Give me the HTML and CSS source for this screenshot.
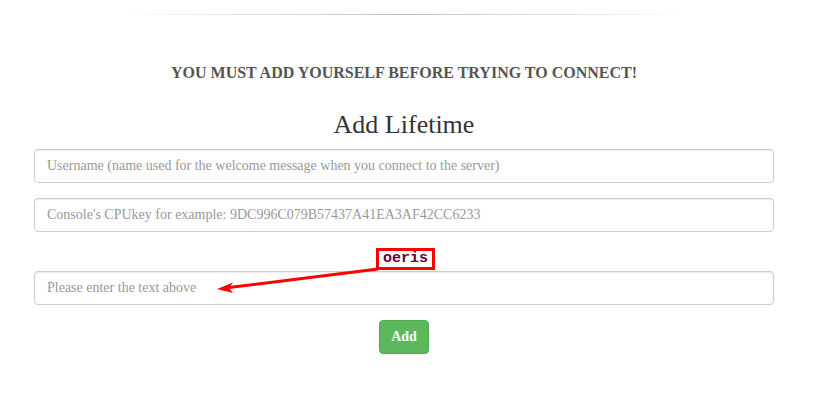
FILE: index.html
```html
<!DOCTYPE html>
<html lang="en">
<head>
  <meta charset="UTF-8" />
  <title>Add Lifetime</title>
  <link rel="stylesheet" href="styles.css">
</head>
<body>
  <div class="page">
    <hr class="fade-line">

    <div class="panel">
      <h4 class="notice">YOU MUST ADD YOURSELF BEFORE TRYING TO CONNECT!</h4>
      <h2 class="title">Add Lifetime</h2>

      <form class="add-form" onsubmit="return false">
        <input type="text" class="form-control" placeholder="Username (name used for the welcome message when you connect to the server)">
        <input type="text" class="form-control" placeholder="Console's CPUkey for example: 9DC996C079B57437A41EA3AF42CC6233">

        <div class="captcha-row">
          <span class="captcha">oeris</span>
        </div>
        <input type="text" class="form-control captcha-input" placeholder="Please enter the text above">

        <div class="actions">
          <button type="submit" class="btn-add">Add</button>
        </div>
      </form>
    </div>

    <!-- pointer from the captcha word to its field -->
    <svg class="pointer" width="831" height="408" viewBox="0 0 831 408">
      <line x1="378" y1="269" x2="229" y2="287.5" stroke="#f00" stroke-width="3" />
      <polygon points="217,289 233,282.5 229,288 233,293" fill="#f00" />
    </svg>
  </div>
</body>
</html>
```

FILE: styles.css
```css
body {
  margin: 0;
  font-family: "Liberation Serif", "Times New Roman", serif;
  background-color: #fff;
  color: #333;
}

.page {
  position: relative;
  width: 831px;
  height: 408px;
  overflow: hidden;
}

.fade-line {
  margin: 14px 0 0 120px;
  width: 570px;
  height: 1px;
  border: none;
  background: linear-gradient(to right, rgba(0,0,0,0), rgba(0,0,0,0.25), rgba(0,0,0,0));
}

.panel {
  margin-left: 34px;
  width: 740px;
}

.notice {
  margin: 50px 0 0;
  text-align: center;
  font-size: 16px;
  font-weight: bold;
  line-height: 16px;
  color: #555;
}

.title {
  margin: 29px 0 0;
  text-align: center;
  font-size: 26px;
  font-weight: normal;
  line-height: 30px;
  color: #333;
}

.add-form {
  margin-top: 9px;
}

.form-control {
  display: block;
  box-sizing: border-box;
  width: 100%;
  height: 34px;
  padding: 6px 12px;
  margin: 0 0 15px;
  font-family: inherit;
  font-size: 14px;
  color: #555;
  background-color: #fff;
  border: 1px solid #ccc;
  border-radius: 4px;
  box-shadow: inset 0 1px 1px rgba(0,0,0,0.075);
}

.form-control::placeholder {
  color: #999;
}

.captcha-row {
  margin-top: 16px;
  height: 23px;
  padding-left: 342px;
}

.captcha {
  display: inline-block;
  box-sizing: border-box;
  height: 22px;
  padding: 0 4px;
  border: 3px solid #f00;
  font-family: "Liberation Mono", "Courier New", monospace;
  font-size: 15px;
  font-weight: bold;
  line-height: 16px;
  color: #660033;
}

.captcha-input {
  margin-top: 0;
}

.actions {
  text-align: center;
}

.btn-add {
  height: 34px;
  padding: 6px 11px;
  font-family: inherit;
  font-size: 14px;
  font-weight: bold;
  color: #fff;
  background-color: #5cb85c;
  border: 1px solid #4cae4c;
  border-radius: 4px;
  cursor: pointer;
}

.pointer {
  position: absolute;
  top: 0;
  left: 0;
  pointer-events: none;
}
```
